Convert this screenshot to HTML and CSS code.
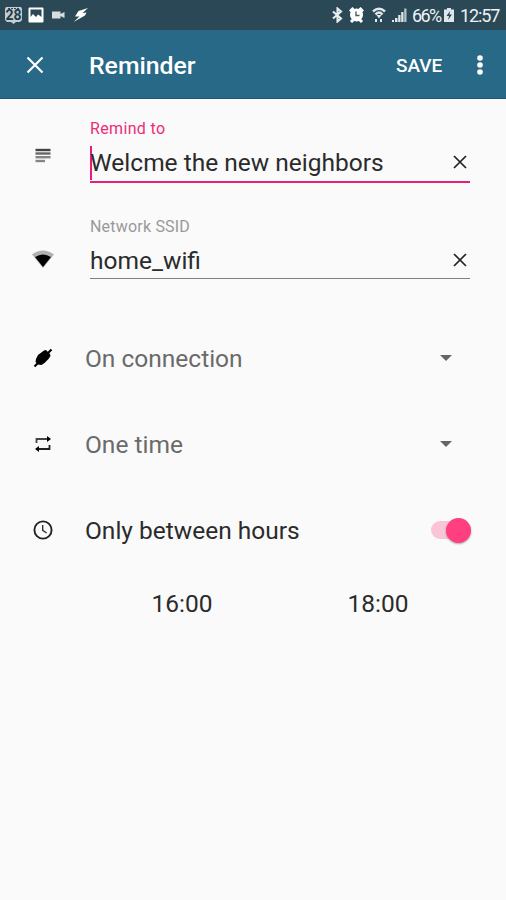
FILE: index.html
```html
<!DOCTYPE html>
<html lang="en">
<head>
    <meta charset="UTF-8">
    <meta name="viewport" content="width=device-width, initial-scale=1.0">
    <title>Reminder</title>
    <link rel="stylesheet" href="styles.css">
</head>
<body>
    <div class="status-bar">
        <div class="notifications">
            <svg class="icon-calendar" width="19" height="18" viewBox="0 0 19 18">
                <path d="M2 1h15l1 2v11l-2 2h-4l-2.5 2L7 16H3l-2-2V3z" fill="#c3ced3"/>
                <path d="M4 2.5h11" stroke="#2a4856" stroke-width="1" stroke-dasharray="2 1"/>
                <text x="9.5" y="14.2" text-anchor="middle">28</text>
            </svg>
            <svg class="icon-picture" width="16" height="16" viewBox="0 0 16 16">
                <path fill="#fff" fill-rule="evenodd" d="M1.5.5h13a1 1 0 0 1 1 1v13a1 1 0 0 1-1 1h-13a1 1 0 0 1-1-1v-13a1 1 0 0 1 1-1zM2.5 2.5V10L5 7l3 3 2-2.5 1.5 1 2 1.5V2.5z"/>
            </svg>
            <svg class="icon-video" width="13" height="8" viewBox="0 0 13 8">
                <path fill="#d5dee1" d="M0 .5h8.5V3l4-2v6l-4-2v2.5H0z"/>
            </svg>
            <svg class="icon-bolt" width="16" height="16" viewBox="0 0 16 16">
                <path fill="#fff" d="M15 1L5.5 4 2 9.5h4.5L.5 15 12 8.5l1.5-3-4 .5z"/>
            </svg>
        </div>
        <div class="system">
            <svg class="icon-bluetooth" width="11" height="16" viewBox="0 0 11 16">
                <path fill="none" stroke="#e8eef0" stroke-width="2.1" d="M1 4.5l8 7-3.5 3v-13l3.500 3-8 7"/>
            </svg>
            <svg class="icon-alarm" width="15" height="16" viewBox="0 0 15 16">
                <path d="M1 4.5L4.500 1M14 4.500L10.500 1M2 15l3-3M13 15l-3-3" stroke="#fff" stroke-width="3"/>
                <circle cx="7.5" cy="8" r="6.5" fill="#fff"/>
                <path d="M7 4.5v4h3.500" fill="none" stroke="#45606c" stroke-width="1.4"/>
            </svg>
            <svg class="icon-signal-wifi" width="14" height="16" viewBox="0 0 14 16">
                <path d="M1 4.5Q7-1 13 4.500M3.500 7.500Q7 3.500 10.500 7.500" fill="none" stroke="#e0e8eb" stroke-width="2.4"/>
                <path d="M4.5 8h5L7 11.500zM3 12h2v3H3zM8 12h2v3H8z" fill="#e0e8eb"/>
            </svg>
            <svg class="icon-cell" width="16" height="16" viewBox="0 0 16 16">
                <path d="M1 13h2v2H1zM4 11h2.500v4H4zM7.200 8h2.300v7H7.200zM10.200 5h2.300v10h-2.300z" fill="#dfe7ea"/>
                <path d="M13.200 1.500h2.300V15h-2.300z" fill="#b5c2c8"/>
            </svg>
            <span class="battery-level">66%</span>
            <svg class="icon-battery" width="10" height="16" viewBox="0 0 10 16">
                <path fill="#dfe7ea" d="M3 1h4v1.500h3V15H0V2.500h3z"/>
                <path fill="#2a4856" d="M6 4L2.500 9H5l-1 4 4-5.500H5.500z"/>
            </svg>
            <span class="clock">12:57</span>
        </div>
    </div>

    <header class="app-bar">
        <svg class="close" width="18" height="18" viewBox="0 0 18 18">
            <path d="M1.5 1.5l15 15M16.500 1.500l-15 15" stroke="#fff" stroke-width="2.2"/>
        </svg>
        <h1>Reminder</h1>
        <span class="save">SAVE</span>
        <svg class="more" width="6" height="20" viewBox="0 0 6 20">
            <circle cx="3" cy="3" r="2.8" fill="#fff"/>
            <circle cx="3" cy="10" r="2.8" fill="#fff"/>
            <circle cx="3" cy="17" r="2.8" fill="#fff"/>
        </svg>
    </header>

    <main class="form">
        <div class="field-row">
            <div class="row-icon icon-notes">
                <svg width="16" height="16" viewBox="0 0 16 16">
                    <path d="M.5 2h15" stroke="#444" stroke-width="2.4"/>
                    <path d="M.5 5.5h15" stroke="#666" stroke-width="2.4"/>
                    <path d="M.5 9.2h15" stroke="#858585" stroke-width="2.4"/>
                    <path d="M.5 13H10" stroke="#858585" stroke-width="2.4"/>
                </svg>
            </div>
            <div class="field active">
                <div class="label">Remind to</div>
                <div class="input">
                    <span class="value">Welcme the new neighbors</span>
                    <svg class="clear" width="14" height="14" viewBox="0 0 14 14">
                        <path d="M1 1l12 12M13 1L1 13" stroke="#222" stroke-width="1.7"/>
                    </svg>
                </div>
            </div>
        </div>

        <div class="field-row">
            <div class="row-icon icon-wifi">
                <svg width="22" height="18" viewBox="0 0 22 18">
                    <path fill="#b0b0b0" d="M0 4.500Q11-3.500 22 4.500L11 18z"/>
                    <path fill="#000" d="M3 7Q11 2 19 7L11 17z"/>
                </svg>
            </div>
            <div class="field">
                <div class="label">Network SSID</div>
                <div class="input">
                    <span class="value">home_wifi</span>
                    <svg class="clear" width="14" height="14" viewBox="0 0 14 14">
                        <path d="M1 1l12 12M13 1L1 13" stroke="#222" stroke-width="1.7"/>
                    </svg>
                </div>
            </div>
        </div>

        <div class="options">
            <div class="option">
                <div class="row-icon">
                    <svg width="20" height="20" viewBox="0 0 20 20">
                        <path d="M1.5 18.5l17-17" stroke="#000" stroke-width="2.2"/>
                        <path d="M11 2.5l2-.5 4 4 .5 2-2 3-4 4-3 2-3.500-.5L2.500 14l.5-3 2-4z" fill="#000"/>
                    </svg>
                </div>
                <span class="choice">On connection</span>
                <span class="arrow"></span>
            </div>
            <div class="option">
                <div class="row-icon">
                    <svg width="18" height="18" viewBox="0 0 18 18">
                        <path d="M2.5 8V4H14" fill="none" stroke="#444" stroke-width="1.8"/>
                        <path d="M15.5 10v4H4" fill="none" stroke="#222" stroke-width="1.8"/>
                        <path d="M13 1l4 3-4 3zM5 11l-4 3 4 3z" fill="#000"/>
                    </svg>
                </div>
                <span class="choice">One time</span>
                <span class="arrow"></span>
            </div>
            <div class="option">
                <div class="row-icon">
                    <svg width="20" height="20" viewBox="0 0 20 20">
                        <circle cx="10" cy="10" r="8.6" fill="none" stroke="#222" stroke-width="1.9"/>
                        <path d="M9.7 5v5.3l4 2.700" fill="none" stroke="#333" stroke-width="1.4"/>
                    </svg>
                </div>
                <span class="choice choice-hours">Only between hours</span>
                <span class="switch"></span>
            </div>
        </div>

        <div class="times">
            <span>16:00</span>
            <span>18:00</span>
        </div>
    </main>
</body>
</html>
```
FILE: styles.css
```css
* {
    box-sizing: border-box;
}

body {
    margin: 0;
    min-height: 900px;
    background-color: #fafafa;
    color: #2b2b2b;
    font-family: Roboto, sans-serif;
}

svg {
    display: block;
    flex-shrink: 0;
}

.status-bar {
    display: flex;
    justify-content: space-between;
    height: 30px;
    padding: 0 6px 0 4px;
    background-color: #2a4856;
    color: #eef3f5;
    font-size: 18px;
}

.notifications, .system {
    display: flex;
    align-items: center;
}

.icon-calendar text {
    font-size: 14px;
    font-weight: bold;
    fill: #1f3b48;
}

.icon-picture {
    margin-left: 5px;
}

.icon-video {
    margin-left: 8px;
}

.icon-bolt {
    margin-left: 8px;
}

.icon-alarm {
    margin-left: 6px;
}

.icon-signal-wifi {
    margin-left: 8px;
}

.icon-cell {
    margin-left: 5px;
}

.battery-level {
    width: 29px;
    margin-left: 5px;
    letter-spacing: -1.6px;
    line-height: 30px;
    padding-top: 1px;
}

.icon-battery {
    margin-left: 3px;
}

.clock {
    width: 40px;
    margin-left: 6px;
    letter-spacing: -1.1px;
    line-height: 30px;
    padding-top: 1px;
}

.app-bar {
    display: flex;
    align-items: center;
    height: 69px;
    padding: 1px 23px 0 26px;
    background-color: #276986;
    border-bottom: 1px solid #1e5673;
    color: #fff;
}

.app-bar h1 {
    flex: 1;
    margin: 0 0 0 45px;
    font-size: 24.8px;
    font-weight: 500;
    line-height: 30px;
    padding-top: 2px;
}

.save {
    width: 47px;
    font-size: 19px;
    font-weight: 500;
    padding-top: 2px;
}

.more {
    margin-left: 34px;
}

.form {
    padding-top: 19px;
}

.field-row {
    display: flex;
    height: 98px;
}

.row-icon {
    display: flex;
    flex-shrink: 0;
    justify-content: center;
    width: 85px;
}

.icon-notes {
    padding-top: 30px;
}

.icon-wifi {
    padding-top: 34px;
}

.field {
    width: 380px;
    margin-left: 5px;
}

.label {
    height: 20px;
    color: #999;
    font-size: 16px;
    letter-spacing: 0.2px;
    line-height: 22px;
}

.input {
    display: flex;
    align-items: flex-start;
    justify-content: space-between;
    height: 43px;
    padding: 8px 3px 0 0;
    border-bottom: 1px solid #808080;
    font-size: 24.5px;
    line-height: 34px;
}

.clear {
    margin-top: 9px;
}

.active .label {
    color: #ec2d79;
    letter-spacing: 0.35px;
}

.active .input {
    height: 45px;
    border-bottom: 2px solid #ea1e78;
}

/* text cursor before the first letter */
.active .value {
    box-shadow: inset 2px 0 0 #ea1e78;
}

.options {
    padding-top: 1px;
}

.option {
    display: flex;
    align-items: center;
    height: 86px;
}

.choice {
    flex: 1;
    color: #6a6a6a;
    font-size: 24.5px;
}

.choice-hours {
    color: #2b2b2b;
}

.arrow {
    margin-right: 54px;
    border: 6px solid transparent;
    border-top-color: #666;
    border-bottom: 0;
}

.switch {
    display: flex;
    justify-content: flex-end;
    align-items: center;
    width: 40px;
    height: 18px;
    margin-right: 35px;
    border-radius: 9px;
    background-color: #fbc5d8;
}

.switch::after {
    content: "";
    width: 25px;
    height: 25px;
    border-radius: 50%;
    background-color: #ff3f80;
    box-shadow: 0 1px 2px rgba(0, 0, 0, 0.35);
}

.times {
    display: flex;
    height: 62px;
    margin: 0 30px 0 84px;
    font-size: 24.5px;
    line-height: 62px;
    text-align: center;
}

.times span {
    flex: 1;
}
```
